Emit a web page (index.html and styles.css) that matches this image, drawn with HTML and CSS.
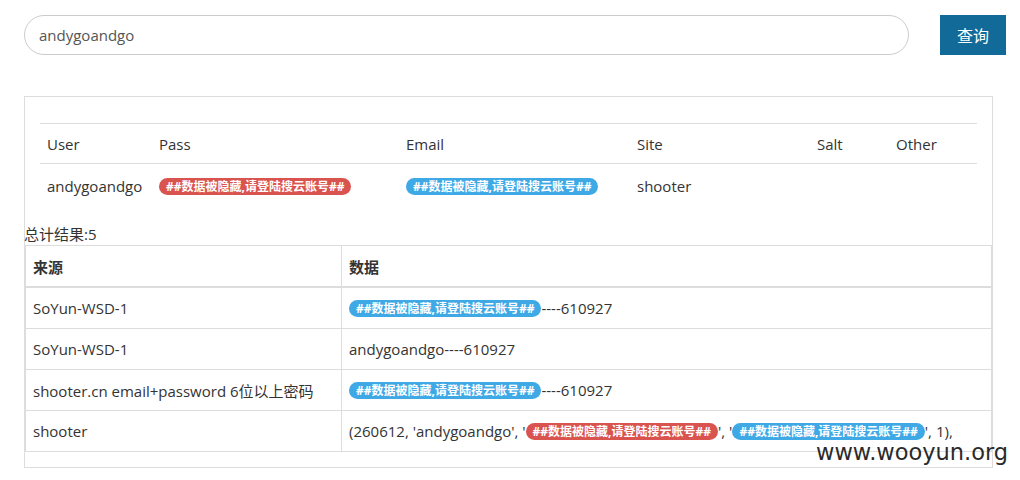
FILE: index.html
```html
<!DOCTYPE html>
<html lang="zh-CN">

<head>
    <meta charset="UTF-8">
    <meta name="viewport" content="width=device-width, initial-scale=1.0">
    <title>搜云查询</title>
    <link rel="stylesheet" href="styles.css">
</head>

<body>
    <!-- Search bar -->
    <form class="search" onsubmit="return false">
        <input type="text" class="search-input" value="andygoandgo">
        <button type="submit" class="search-btn">查询</button>
    </form>

    <!-- Result panel -->
    <div class="panel">
        <table class="table-main">
            <thead>
                <tr>
                    <th class="col-user">User</th>
                    <th class="col-pass">Pass</th>
                    <th class="col-email">Email</th>
                    <th class="col-site">Site</th>
                    <th class="col-salt">Salt</th>
                    <th>Other</th>
                </tr>
            </thead>
            <tbody>
                <tr>
                    <td>andygoandgo</td>
                    <td><span class="badge red">##数据被隐藏,请登陆搜云账号##</span></td>
                    <td><span class="badge blue">##数据被隐藏,请登陆搜云账号##</span></td>
                    <td>shooter</td>
                    <td></td>
                    <td></td>
                </tr>
            </tbody>
        </table>

        <div class="total">总计结果:5</div>

        <table class="table-bordered">
            <thead>
                <tr>
                    <th class="col-source">来源</th>
                    <th>数据</th>
                </tr>
            </thead>
            <tbody>
                <tr>
                    <td>SoYun-WSD-1</td>
                    <td><span class="badge blue">##数据被隐藏,请登陆搜云账号##</span>----610927</td>
                </tr>
                <tr>
                    <td>SoYun-WSD-1</td>
                    <td>andygoandgo----610927</td>
                </tr>
                <tr>
                    <td>shooter.cn email+password 6位以上密码</td>
                    <td><span class="badge blue">##数据被隐藏,请登陆搜云账号##</span>----610927</td>
                </tr>
                <tr>
                    <td>shooter</td>
                    <td>(260612, 'andygoandgo', '<span class="badge red">##数据被隐藏,请登陆搜云账号##</span>', '<span class="badge blue">##数据被隐藏,请登陆搜云账号##</span>', 1),</td>
                </tr>
            </tbody>
        </table>
    </div>

    <div class="watermark">www.wooyun.org</div>
</body>

</html>
```

FILE: styles.css
```css
/* Base */
body {
    font-family: "Open Sans", "Noto Sans CJK SC", sans-serif;
    font-size: 15px;
    color: #333;
    margin: 0;
    padding: 15px 14px 0 24px;
    background: #fff;
}

/* Search bar */
.search {
    display: flex;
    align-items: center;
    gap: 31px;
    margin: 0;
}

.search-input {
    flex: 1;
    height: 40px;
    box-sizing: border-box;
    border: 1px solid #ccc;
    border-radius: 20px;
    padding: 0 14px;
    font-family: inherit;
    font-size: 15px;
    color: #555;
    outline: none;
}

.search-btn {
    width: 66px;
    height: 40px;
    background: #126a98;
    color: #fff;
    border: none;
    font-family: inherit;
    font-size: 16px;
    cursor: pointer;
}

/* Panel */
.panel {
    width: 969px;
    box-sizing: border-box;
    margin-top: 41px;
    border: 1px solid #ddd;
    padding: 26px 0 15px;
}

table {
    border-collapse: collapse;
    border-spacing: 0;
}

.table-main {
    width: calc(100% - 30px);
    margin: 0 15px;
}

.table-main th,
.table-main td {
    text-align: left;
    font-weight: normal;
    padding: 0 7px;
    border-top: 1px solid #ddd;
    vertical-align: middle;
}

.table-main th {
    height: 39px;
}

.table-main td {
    height: 43px;
}

.col-user { width: 98px; }
.col-pass { width: 233px; }
.col-email { width: 217px; }
.col-site { width: 166px; }
.col-salt { width: 65px; }

.total {
    line-height: 22px;
    margin-top: 16px;
    margin-left: -1px;
}

/* Bordered table */
.table-bordered {
    width: 100%;
}

.table-bordered th,
.table-bordered td {
    text-align: left;
    border: 1px solid #ddd;
    padding: 0 7px;
    height: 40px;
    vertical-align: middle;
}

.table-bordered th {
    font-weight: bold;
    height: 40px;
    border-bottom-width: 2px;
}

.col-source {
    width: 301px;
}

/* Badges */
.badge {
    display: inline-block;
    font-size: 12px;
    font-weight: bold;
    line-height: 17px;
    color: #fff;
    padding: 0 7px;
    border-radius: 9px;
    vertical-align: 1px;
}

.badge.red {
    background: #d9534f;
}

.badge.blue {
    background: #3fa9e6;
}

/* Watermark */
.watermark {
    position: absolute;
    left: 816px;
    top: 441px;
    font-family: "DejaVu Sans", sans-serif;
    font-size: 22.5px;
    line-height: 1;
    color: #2a2a2a;
}
```
